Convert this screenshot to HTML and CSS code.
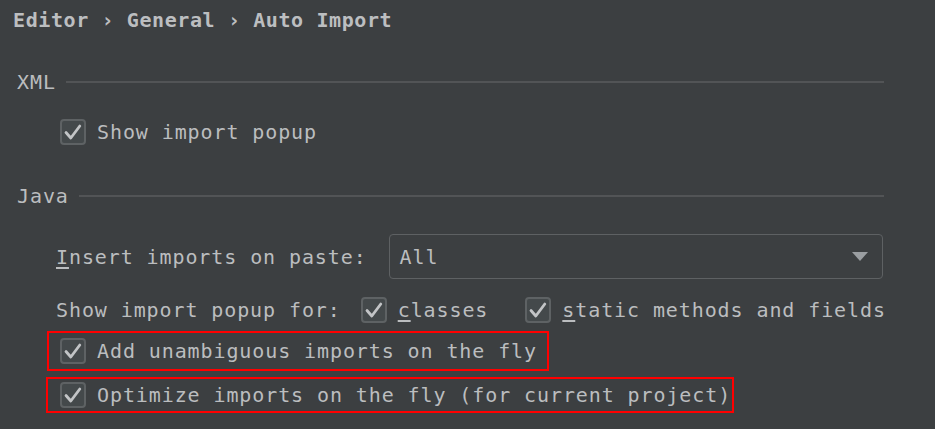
FILE: index.html
```html
<!DOCTYPE html>
<html>
<head>
<meta charset="utf-8">
<link rel="stylesheet" href="styles.css">
</head>
<body>
<div class="page">
  <div class="breadcrumb">Editor › General › Auto Import</div>

  <div class="section sec-xml">
    <span class="section-title">XML</span>
    <span class="section-line"></span>
  </div>
  <div class="row indent row-show">
    <span class="cb"><svg viewBox="0 0 26 26" width="26" height="26"><path d="M6 13.5 L10.8 19 L19.8 7" fill="none" stroke="#c2c4c6" stroke-width="2.8" stroke-linecap="round" stroke-linejoin="round"/></svg></span>
    <span class="cb-label">Show import popup</span>
  </div>

  <div class="section sec-java">
    <span class="section-title">Java</span>
    <span class="section-line"></span>
  </div>

  <div class="row label-indent row-paste">
    <span class="label"><u>I</u>nsert imports on paste:</span>
    <div class="dropdown">
      <span class="dd-text">All</span>
      <svg class="dd-arrow" viewBox="0 0 16 9" width="16" height="9"><path d="M0 0 H16 L8 9 Z" fill="#9a9ea1"/></svg>
    </div>
  </div>

  <div class="row label-indent row-popupfor">
    <span class="label">Show import popup for:</span>
    <span class="cb cb-inline"><svg viewBox="0 0 26 26" width="26" height="26"><path d="M6 13.5 L10.8 19 L19.8 7" fill="none" stroke="#c2c4c6" stroke-width="2.8" stroke-linecap="round" stroke-linejoin="round"/></svg></span>
    <span class="cb-label"><u>c</u>lasses</span>
    <span class="cb cb-inline cb-second"><svg viewBox="0 0 26 26" width="26" height="26"><path d="M6 13.5 L10.8 19 L19.8 7" fill="none" stroke="#c2c4c6" stroke-width="2.8" stroke-linecap="round" stroke-linejoin="round"/></svg></span>
    <span class="cb-label"><u>s</u>tatic methods and fields</span>
  </div>

  <div class="highlight hl-first">
    <span class="cb"><svg viewBox="0 0 26 26" width="26" height="26"><path d="M6 13.5 L10.8 19 L19.8 7" fill="none" stroke="#c2c4c6" stroke-width="2.8" stroke-linecap="round" stroke-linejoin="round"/></svg></span>
    <span class="cb-label">Add unambiguous imports on the fly</span>
  </div>

  <div class="highlight hl-second">
    <span class="cb"><svg viewBox="0 0 26 26" width="26" height="26"><path d="M6 13.5 L10.8 19 L19.8 7" fill="none" stroke="#c2c4c6" stroke-width="2.8" stroke-linecap="round" stroke-linejoin="round"/></svg></span>
    <span class="cb-label">Optimize imports on the fly (for current project)</span>
  </div>
</div>
</body>
</html>
```

FILE: styles.css
```css
html, body {
  margin: 0;
  padding: 0;
  background: #3c3f41;
  overflow: hidden;
}

.page {
  width: 935px;
  height: 429px;
  color: #bbbdbf;
  font-family: "DejaVu Sans Mono", "Liberation Mono", monospace;
  font-size: 20px;
  letter-spacing: 0.9px;
}

.breadcrumb {
  height: 40px;
  display: flex;
  align-items: center;
  padding-left: 13px;
  font-weight: bold;
  letter-spacing: 0.6px;
  color: #bcbec0;
}

.section {
  display: flex;
  align-items: center;
  height: 28px;
  padding-left: 17px;
  width: 867px;
}

.sec-xml { margin-top: 28px; }
.sec-java { margin-top: 36px; }

.section-title {
  padding-right: 10px;
}

.section-line {
  flex: 1;
  height: 2px;
  background: #525456;
}

.row {
  display: flex;
  align-items: center;
  height: 28px;
}

.indent { padding-left: 60px; }
.label-indent { padding-left: 56px; }

.row-show { margin-top: 22px; }

.row-paste {
  margin-top: 24px;
  height: 45px;
}

.row-popupfor { margin-top: 17px; }

.cb {
  width: 22px;
  height: 22px;
  border: 2px solid #5e6264;
  border-radius: 4px;
  background: #44494b;
  display: inline-flex;
  align-items: center;
  justify-content: center;
  flex: none;
  overflow: hidden;
}

.cb svg {
  display: block;
  flex: none;
}

.cb-label {
  margin-left: 11px;
  white-space: nowrap;
}

.cb-inline { margin-left: 20px; }
.cb-second { margin-left: 37px; }

.label { white-space: nowrap; }

u {
  text-decoration-thickness: 2px;
  text-underline-offset: 3px;
}

.dropdown {
  margin-left: 22px;
  border: 1px solid #5e6163;
  border-radius: 4px;
  display: flex;
  align-items: center;
  padding-left: 10px;
  padding-right: 14px;
  box-sizing: border-box;
  width: 494px;
  height: 45px;
}

.dd-text { flex: 1; }

.dd-arrow {
  display: block;
}

.highlight {
  display: flex;
  align-items: center;
  width: max-content;
  border: 2px solid #ff0000;
  padding-left: 11px;
}

.hl-first {
  margin-top: 7px;
  margin-left: 47px;
  height: 36px;
  padding-right: 10px;
}

.hl-second {
  margin-top: 6px;
  margin-left: 46px;
  height: 32px;
  padding-left: 12px;
  padding-right: 1px;
}
```
